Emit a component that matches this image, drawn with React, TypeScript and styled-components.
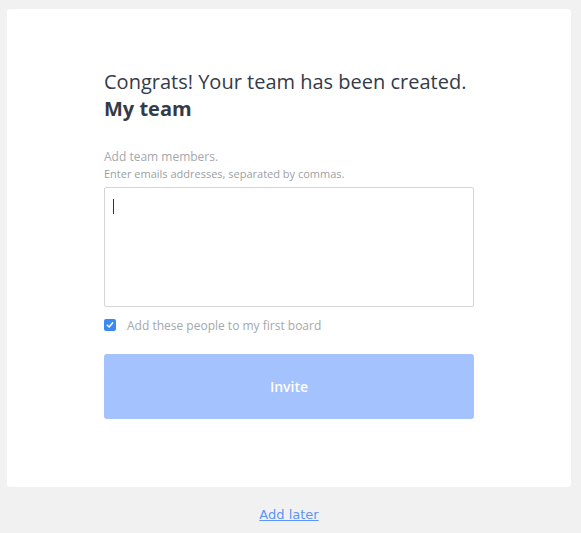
import React from "react";
import styled, { createGlobalStyle } from "styled-components";

const Global = createGlobalStyle`
  html, body { margin: 0; padding: 0; background: #f1f1f1; }
  body { font-family: "Open Sans", "Liberation Sans", sans-serif; }
`;

const Page = styled.div`
  padding: 9px 10px 0 7px;
  display: flex;
  flex-direction: column;
  align-items: stretch;
`;

const Card = styled.div`
  background: #ffffff;
  border-radius: 3px;
  height: 478px;
  box-sizing: border-box;
  padding-top: 59px;
  display: flex;
  flex-direction: column;
  align-items: center;
`;

const Content = styled.div`
  width: 370px;
  display: flex;
  flex-direction: column;
`;

const Title = styled.h1`
  margin: 0;
  font-size: 20px;
  line-height: 27px;
  font-weight: 400;
  color: #343b48;
`;

const TeamName = styled.span`
  display: block;
  font-weight: 700;
`;

const Label = styled.div`
  margin-top: 26px;
  font-size: 12px;
  line-height: 18px;
  color: #a3a8ad;
`;

const Hint = styled.div`
  font-size: 11px;
  line-height: 16px;
  color: #9a9fa4;
`;

const EmailsWrap = styled.div`
  position: relative;
  margin-top: 5px;
`;

const Emails = styled.textarea`
  box-sizing: border-box;
  width: 370px;
  height: 120px;
  border: 1px solid #d3d6d9;
  border-radius: 2px;
  resize: none;
  outline: none;
  padding: 10px 8px;
  font-family: inherit;
  font-size: 13px;
  display: block;
`;

const Caret = styled.span`
  position: absolute;
  left: 9px;
  top: 12px;
  width: 1px;
  height: 15px;
  background: #333;
`;

const CheckRow = styled.label`
  margin-top: 11px;
  display: flex;
  align-items: center;
  gap: 11px;
  font-size: 12px;
  color: #a3a8ad;
  height: 14px;
`;

const CheckBox = styled.span`
  width: 12px;
  height: 12px;
  border-radius: 2px;
  background: #3b89f5;
  display: flex;
  align-items: center;
  justify-content: center;
`;

const InviteButton = styled.button`
  margin-top: 22px;
  height: 65px;
  width: 370px;
  border: none;
  border-radius: 3px;
  background: #a4c2fe;
  color: #ffffff;
  font-family: inherit;
  font-size: 14px;
  font-weight: 600;
`;

const Footer = styled.div`
  display: flex;
  justify-content: center;
  padding-top: 20px;
`;

const LaterLink = styled.a`
  color: #5b95f9;
  text-decoration: underline;
  font-family: "DejaVu Sans", "Open Sans", sans-serif;
  font-size: 13px;
`;

export default function App() {
  return (
    <>
      <Global />
      <Page>
        <Card>
          <Content>
            <Title>
              Congrats! Your team has been created.
              <TeamName>My team</TeamName>
            </Title>
            <Label>Add team members.</Label>
            <Hint>Enter emails addresses, separated by commas.</Hint>
            <EmailsWrap>
              <Emails />
              <Caret />
            </EmailsWrap>
            <CheckRow>
              <CheckBox>
                <svg width="8" height="8" viewBox="0 0 8 8">
                  <path d="M1.3 4.2 L3.2 6 L6.7 1.8" fill="none" stroke="#fff" strokeWidth="1.4" strokeLinecap="round" strokeLinejoin="round" />
                </svg>
              </CheckBox>
              Add these people to my first board
            </CheckRow>
            <InviteButton>Invite</InviteButton>
          </Content>
        </Card>
        <Footer>
          <LaterLink href="#">Add later</LaterLink>
        </Footer>
      </Page>
    </>
  );
}
